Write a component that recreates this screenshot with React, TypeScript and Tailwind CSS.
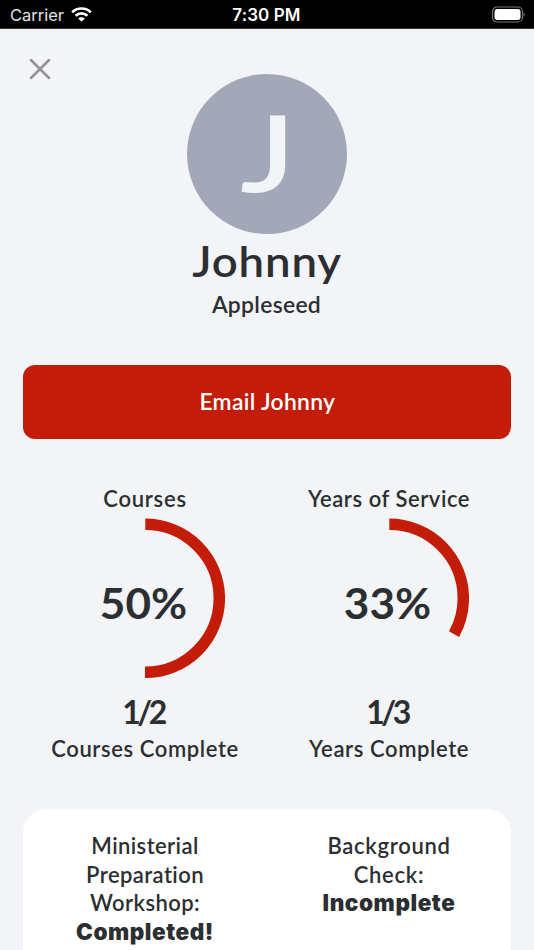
import React from "react";

type RingProps = { title: string; percent: number; fraction: string; caption: string; titleSpacing: string };

const RADIUS = 74;
const LENGTH = 2 * Math.PI * RADIUS;

function StatusBar() {
  return (
    <header className="grid h-[29px] shrink-0 grid-cols-3 items-center border-b border-[#333] bg-black px-[9px] font-['Inter','Liberation_Sans',sans-serif] text-white">
      <div className="flex items-center gap-[7px] pl-[1px]">
        <span className="pt-[2px] text-[16.5px] leading-[26px] text-[#e4e4e4]">Carrier</span>
        <svg width="21" height="17" viewBox="0 0 22 17" fill="none" stroke="white" strokeWidth="2.7">
          <path d="M1.2 6.1C6.6.9 15.4.9 20.8 6.1" />
          <path d="M4.8 9.8c3.5-3.3 8.9-3.3 12.4 0" />
          <path d="M11 16.2 7.5 12.7c1.9-1.8 5.1-1.8 7 0Z" fill="white" stroke="none" />
        </svg>
      </div>
      <span className="pr-[1px] pt-[2px] text-center text-[17px] font-semibold leading-[26px] tracking-[0.1px]">7:30 PM</span>
      <svg className="justify-self-end" width="34" height="17" viewBox="0 0 34 17">
        <rect x="1.5" y="1" width="30" height="15" rx="4.5" fill="none" stroke="#777" strokeWidth="1.2" />
        <rect x="3.5" y="3" width="26" height="11" rx="2.7" fill="white" />
        <path d="M32.6 6.4c1.5.7 1.5 3.5 0 4.2Z" fill="#777" />
      </svg>
    </header>
  );
}

function Ring({ title, percent, fraction, caption, titleSpacing }: RingProps) {
  return (
    <section className="flex w-[244px] flex-col items-center">
      <h2 className={`h-[33px] text-[22px] font-semibold leading-[28px] ${titleSpacing}`}>{title}</h2>
      <div className="grid h-[160px] w-[160px] place-items-center">
        <svg className="col-start-1 row-start-1 -rotate-90" width="160" height="160" viewBox="0 0 160 160">
          <circle cx="79.7" cy="80.3" r={RADIUS} fill="none" stroke="#c31c08" strokeWidth="11.5" strokeDasharray={`${(LENGTH * percent) / 100} ${LENGTH}`} />
        </svg>
        <span className="col-start-1 row-start-1 scale-x-[1.05] pr-[2px] pt-[10px] text-[42px] font-bold leading-[50px]">{percent}%</span>
      </div>
      <p className="mt-[14px] pr-[4px] text-[32px] font-bold leading-[40px] tracking-[-3.5px]">{fraction}</p>
      <p className="mt-[3px] text-[22px] font-semibold leading-[28px] tracking-[0.6px]">{caption}</p>
    </section>
  );
}

export default function App() {
  return (
    <div className="flex h-[950px] w-[534px] flex-col overflow-hidden bg-[#f3f4f8] font-['Lato','Liberation_Sans',sans-serif] text-[#2b2f32]">
      <StatusBar />
      <div className="flex h-[45px] shrink-0 items-end pl-[29px]">
        <button aria-label="Close" className="-mb-[6px]">
          <svg width="22" height="22" viewBox="0 0 22 22" stroke="#939395" strokeWidth="2.5" strokeLinecap="round">
            <path d="m2 2 18 18M20 2 2 20" />
          </svg>
        </button>
      </div>
      <div className="flex shrink-0 flex-col items-center">
        <div className="flex h-[160px] w-[160px] items-center justify-center rounded-full bg-[#a3a8b8]">
          <span className="scale-x-[1.22] pb-[6px] pl-[2px] text-[106px] font-semibold leading-[154px] text-[#f3f4f6]">J</span>
        </div>
        <h1 className="mt-[2px] scale-x-[1.085] text-[42px] font-semibold leading-[50px] tracking-[0.8px]">Johnny</h1>
        <p className="mt-[5px] scale-x-[1.04] pr-[1px] text-[22px] font-semibold leading-[28px] tracking-[0.3px]">Appleseed</p>
      </div>
      <button className="mx-[23px] mt-[46px] h-[74px] shrink-0 rounded-[12px] bg-[#c31c08] pb-[2px] text-[22px] font-semibold text-white">
        <span className="inline-block scale-x-[1.04] tracking-[0.3px]">Email Johnny</span>
      </button>
      <div className="mx-[23px] mt-[46px] flex shrink-0 bg-[#f3f4f6]">
        <Ring title="Courses" percent={50} fraction="1/2" caption="Courses Complete" titleSpacing="tracking-[0.75px]" />
        <Ring title="Years of Service" percent={33} fraction="1/3" caption="Years Complete" titleSpacing="tracking-[0.55px]" />
      </div>
      <div className="mx-[23px] mt-[46px] flex h-[180px] shrink-0 rounded-t-[24px] bg-white pt-[23px] text-center text-[22px] font-semibold leading-[28.7px]">
        <p className="w-[244px] tracking-[0.4px]">
          Ministerial<br />Preparation<br />Workshop:<br />
          <strong className="font-['Inter',sans-serif] text-[22.5px] font-black tracking-[0.55px]">Completed!</strong>
        </p>
        <p className="w-[244px] tracking-[0.7px]">
          Background<br />Check:<br />
          <strong className="font-['Inter',sans-serif] text-[22.5px] font-black tracking-[0.55px]">Incomplete</strong>
        </p>
      </div>
    </div>
  );
}
